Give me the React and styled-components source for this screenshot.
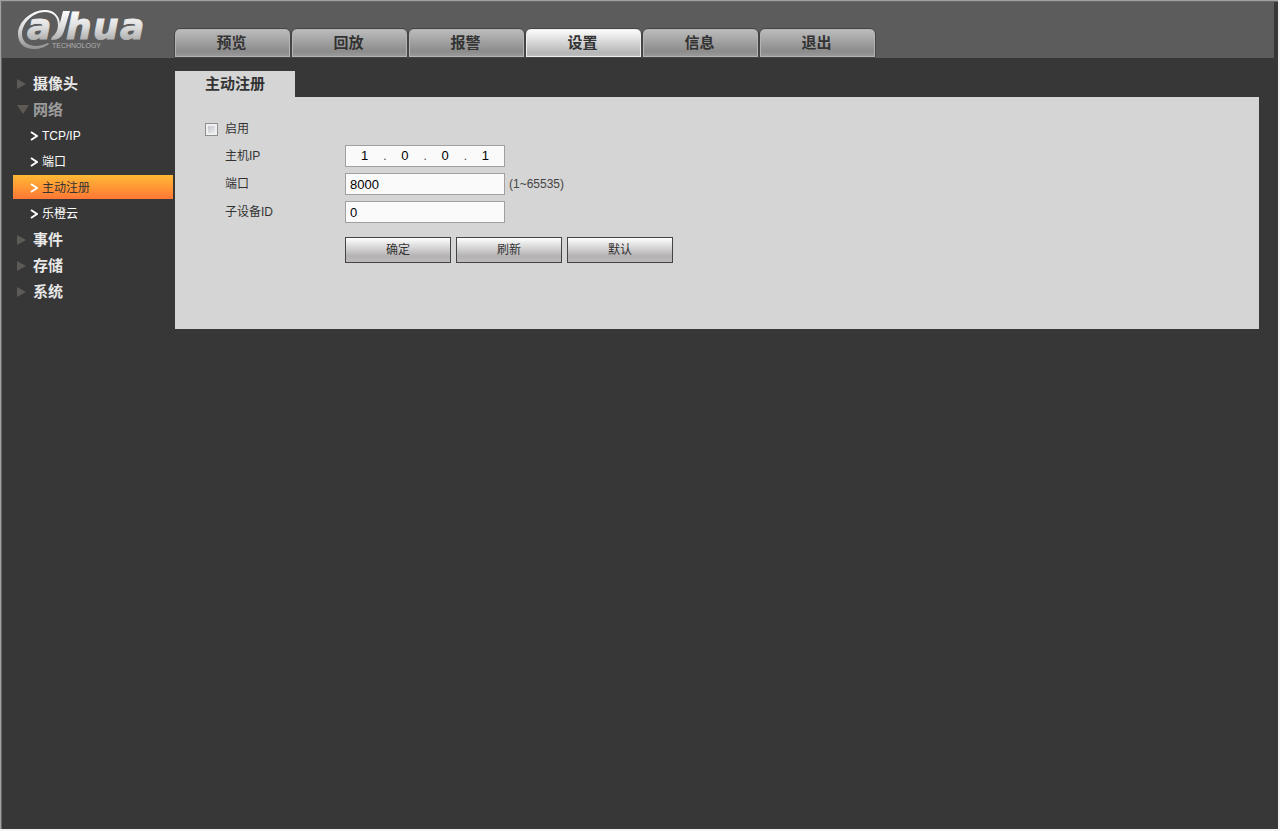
import React, { useState } from "react";
import styled, { createGlobalStyle, css } from "styled-components";

const tabs = ["预览", "回放", "报警", "设置", "信息", "退出"];

const menu = [
  { name: "摄像头" },
  { name: "网络", items: ["TCP/IP", "端口", "主动注册", "乐橙云"] },
  { name: "事件" },
  { name: "存储" },
  { name: "系统" },
];

function Logo() {
  return (
    <LogoSvg viewBox="0 0 130 42" role="img" aria-label="alhua TECHNOLOGY">
      <defs>
        <linearGradient
          id="metal"
          gradientUnits="userSpaceOnUse"
          x1="0"
          y1="0"
          x2="0"
          y2="38"
        >
          <stop offset="0" stopColor="#ffffff" />
          <stop offset="0.45" stopColor="#dddddd" />
          <stop offset="1" stopColor="#949494" />
        </linearGradient>
      </defs>
      <path
        d="M35 29C40 26 43 21 43 15C43 6 37 0 28 0C14 0 1 12 1 24C1 33 7 39 17 39C23 39 28 37 32 34L31 33C27 35 23 36 19 36C10 36 5 31 5 24C5 13 16 2 28 2C36 2 41 7 41 15C41 20 39 24 35 27Z"
        fill="url(#metal)"
      />
      <g
        fill="url(#metal)"
        stroke="url(#metal)"
        strokeWidth="1"
        fontFamily="'DejaVu Sans', Verdana, sans-serif"
        fontWeight="bold"
        fontStyle="italic"
        fontSize="36"
      >
        <text x="10" y="29">
          a
        </text>
        <text x="49" y="29">
          h
        </text>
        <text x="76" y="29">
          u
        </text>
        <text x="103" y="29">
          a
        </text>
      </g>
      <path
        d="M46 1H53L47 21C45 27 42 30 34 30L35 27C38 27 40 25 41 21Z"
        fill="url(#metal)"
      />
      <text
        x="35"
        y="38"
        fontSize="7"
        fill="#b0b0b0"
        fontFamily="'Liberation Sans', Arial, sans-serif"
      >
        TECHNOLOGY
      </text>
    </LogoSvg>
  );
}

export default function App() {
  const [tab, setTab] = useState("设置");
  const [page, setPage] = useState("主动注册");
  return (
    <Window>
      <GlobalStyle />
      <Header>
        <Logo />
        <Tabs>
          {tabs.map((name) => (
            <Tab key={name} $active={name === tab} onClick={() => setTab(name)}>
              {name}
            </Tab>
          ))}
        </Tabs>
      </Header>
      <Body>
        <Sidebar>
          {menu.map((group) => (
            <React.Fragment key={group.name}>
              <Group href="#" $open={!!group.items}>
                <Arrow viewBox="0 0 12 10" aria-hidden="true">
                  {group.items ? (
                    <path d="M0 0H12L6 9Z" fill="#5d5a52" />
                  ) : (
                    <path d="M0 0L9 5L0 10Z" fill="#5d5b57" />
                  )}
                </Arrow>
                {group.name}
              </Group>
              {group.items?.map((name) => (
                <Item
                  key={name}
                  href="#"
                  $active={name === page}
                  onClick={() => setPage(name)}
                >
                  <Chevron viewBox="0 0 8 10" aria-hidden="true">
                    <path
                      d="M1 1L7 5L1 9"
                      fill="none"
                      stroke="#ffffff"
                      strokeWidth="2"
                    />
                  </Chevron>
                  {name}
                </Item>
              ))}
            </React.Fragment>
          ))}
        </Sidebar>
        <Main>
          <Title>主动注册</Title>
          <Panel>
            <Enable>
              <Checkbox type="checkbox" id="enable" />
              <label htmlFor="enable">启用</label>
            </Enable>
            <Field>
              <Label htmlFor="ip0">主机IP</Label>
              <IpBox>
                {["1", "0", "0", "1"].map((part, i) => (
                  <React.Fragment key={i}>
                    {i > 0 && <Dot>.</Dot>}
                    <IpPart
                      id={"ip" + i}
                      aria-label={"主机IP " + (i + 1)}
                      defaultValue={part}
                    />
                  </React.Fragment>
                ))}
              </IpBox>
            </Field>
            <Field>
              <Label htmlFor="port">端口</Label>
              <TextInput id="port" defaultValue="8000" />
              <Hint>(1~65535)</Hint>
            </Field>
            <Field>
              <Label htmlFor="device">子设备ID</Label>
              <TextInput id="device" defaultValue="0" />
            </Field>
            <Actions>
              <Button type="button">确定</Button>
              <Button type="button">刷新</Button>
              <Button type="button">默认</Button>
            </Actions>
          </Panel>
        </Main>
      </Body>
    </Window>
  );
}

const GlobalStyle = createGlobalStyle`
  * {
    box-sizing: border-box;
  }
  body {
    margin: 0;
    background: #f4f4f4;
    color: #333333;
    font: 12px/16px "Liberation Sans", Arial, "Noto Sans CJK SC", sans-serif;
  }
  button,
  input {
    font: inherit;
    color: inherit;
  }
  a {
    text-decoration: none;
  }
`;

const Window = styled.div`
  min-height: calc(100vh - 2px);
  margin: 0 2px 2px 0;
  border-top: 1px solid #a0a0a0;
  border-left: 1px solid #a0a0a0;
  background: #373737;
  box-shadow: inset 1px 1px 0 #696969;
  padding: 1px 0 0 1px;
`;

const Header = styled.header`
  display: flex;
  align-items: flex-end;
  height: 56px;
  margin-right: 4px;
  background: #5c5c5c;
`;

const LogoSvg = styled.svg`
  flex: none;
  width: 130px;
  height: 42px;
  margin: 0 27px 6px 15px;
  overflow: visible;
`;

const Tabs = styled.nav`
  display: flex;
`;

const Tab = styled.button`
  width: 117px;
  height: 30px;
  padding: 0 2px 0 0;
  border: 1px solid #444444;
  border-radius: 6px 6px 0 0;
  background: linear-gradient(#bdbdbd, #8c8c8c 80%, #9c9c9c);
  box-shadow: inset 0 0 0 1px #b4b4b4;
  font-size: 15px;
  font-weight: bold;
  ${(props) =>
    props.$active &&
    css`
      background: linear-gradient(#ffffff, #b6b6b6 85%, #c0c0c0);
      box-shadow: inset 0 0 0 1px #eeeeee;
    `}
`;

const Body = styled.div`
  display: flex;
  align-items: flex-start;
  padding: 13px 19px 0 11px;
`;

const Sidebar = styled.nav`
  display: flex;
  flex-direction: column;
  flex: none;
  gap: 2px;
  width: 160px;
  margin-right: 2px;
`;

const Group = styled.a`
  display: flex;
  align-items: center;
  gap: 4px;
  height: 24px;
  padding: 2px 0 0 4px;
  color: ${(props) => (props.$open ? "#9c9c9c" : "#e8e8e8")};
  font-size: 15px;
  font-weight: bold;
`;

const Arrow = styled.svg`
  width: 12px;
  height: 10px;
`;

const Item = styled.a`
  display: flex;
  align-items: center;
  gap: 4px;
  height: 24px;
  padding: 2px 0 0 17px;
  color: #ffffff;
  ${(props) =>
    props.$active &&
    css`
      background: linear-gradient(#ffb935, #ff7735);
      color: #333333;
    `}
`;

const Chevron = styled.svg`
  width: 8px;
  height: 10px;
`;

const Main = styled.main`
  flex: 1;
`;

const Title = styled.h1`
  width: 120px;
  height: 26px;
  margin: 0;
  background: #d5d5d5;
  font-size: 15px;
  line-height: 26px;
  text-align: center;
`;

const Panel = styled.form`
  padding: 22px 30px 66px;
  background: #d5d5d5;
`;

const Enable = styled.div`
  display: flex;
  align-items: center;
  gap: 7px;
  height: 20px;
  margin-bottom: 6px;
`;

const Checkbox = styled.input`
  appearance: none;
  width: 13px;
  height: 13px;
  margin: 0;
  border: 1px solid #8e8f8f;
  background: linear-gradient(135deg, #b8bcc4, #f6f6f6);
  box-shadow: inset 0 0 0 2px #f0f0f0;
  &:checked {
    background: #4b6a9b;
  }
`;

const Field = styled.div`
  display: flex;
  align-items: center;
  height: 22px;
  margin-bottom: 6px;
  padding-left: 20px;
`;

const Label = styled.label`
  width: 120px;
`;

const box = css`
  width: 160px;
  height: 22px;
  border: 1px solid #a0a0a0;
  background: #fafafa;
  color: #000000;
  font-size: 13px;
`;

const TextInput = styled.input`
  ${box}
  padding: 0 4px;
`;

const IpBox = styled.div`
  ${box}
  display: flex;
  align-items: center;
`;

const IpPart = styled.input`
  flex: 1;
  width: 0;
  height: 18px;
  padding: 0 0 2px;
  border: 0;
  background: none;
  text-align: center;
`;

const Dot = styled.span`
  width: 3px;
  color: #444444;
  font-size: 12px;
`;

const Hint = styled.span`
  margin-left: 4px;
  color: #444444;
`;

const Actions = styled.div`
  display: flex;
  gap: 5px;
  padding: 8px 0 0 140px;
`;

const Button = styled.button`
  width: 106px;
  height: 26px;
  padding: 0;
  border: 1px solid #444444;
  background: linear-gradient(#ffffff, #b4b2b2 75%, #bcbaba);
`;
